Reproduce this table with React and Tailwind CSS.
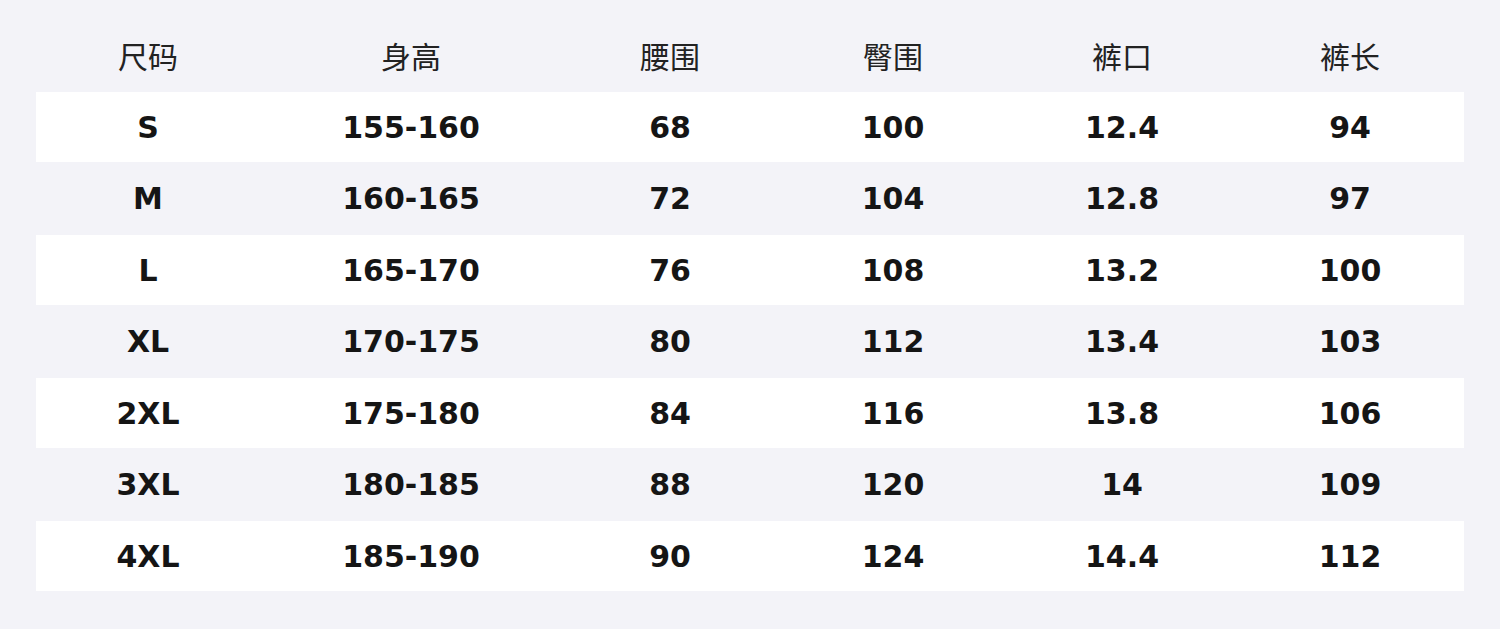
import React from 'react';

const headers = ['尺码', '身高', '腰围', '臀围', '裤口', '裤长'];

const rows = [
  ['S', '155-160', '68', '100', '12.4', '94'],
  ['M', '160-165', '72', '104', '12.8', '97'],
  ['L', '165-170', '76', '108', '13.2', '100'],
  ['XL', '170-175', '80', '112', '13.4', '103'],
  ['2XL', '175-180', '84', '116', '13.8', '106'],
  ['3XL', '180-185', '88', '120', '14', '109'],
  ['4XL', '185-190', '90', '124', '14.4', '112'],
];

const cols = 'grid grid-cols-[224px_302px_216px_230px_228px_228px]';

export default function App() {
  return (
    <div className="w-[1500px] h-[629px] bg-[#f3f3f8] px-[36px] pt-[22px]">
      {/* header */}
      <div className={`${cols} h-[70px] pb-[3px] items-center text-center text-[30px] text-[#222] font-['Noto_Sans_CJK_SC',sans-serif]`}>
        {headers.map((h) => (
          <div key={h}>{h}</div>
        ))}
      </div>

      {/* size rows: white rows are a little shorter than the striped ones */}
      {rows.map((row, i) => (
        <div
          key={row[0]}
          className={`${cols} items-center text-center text-[30px] font-bold text-[#151515] font-['DejaVu_Sans',sans-serif] ${
            i % 2 === 0 ? 'h-[70px] bg-white' : 'h-[73px]'
          }`}
        >
          {row.map((cell, j) => (
            <div key={j}>{cell}</div>
          ))}
        </div>
      ))}
    </div>
  );
}
